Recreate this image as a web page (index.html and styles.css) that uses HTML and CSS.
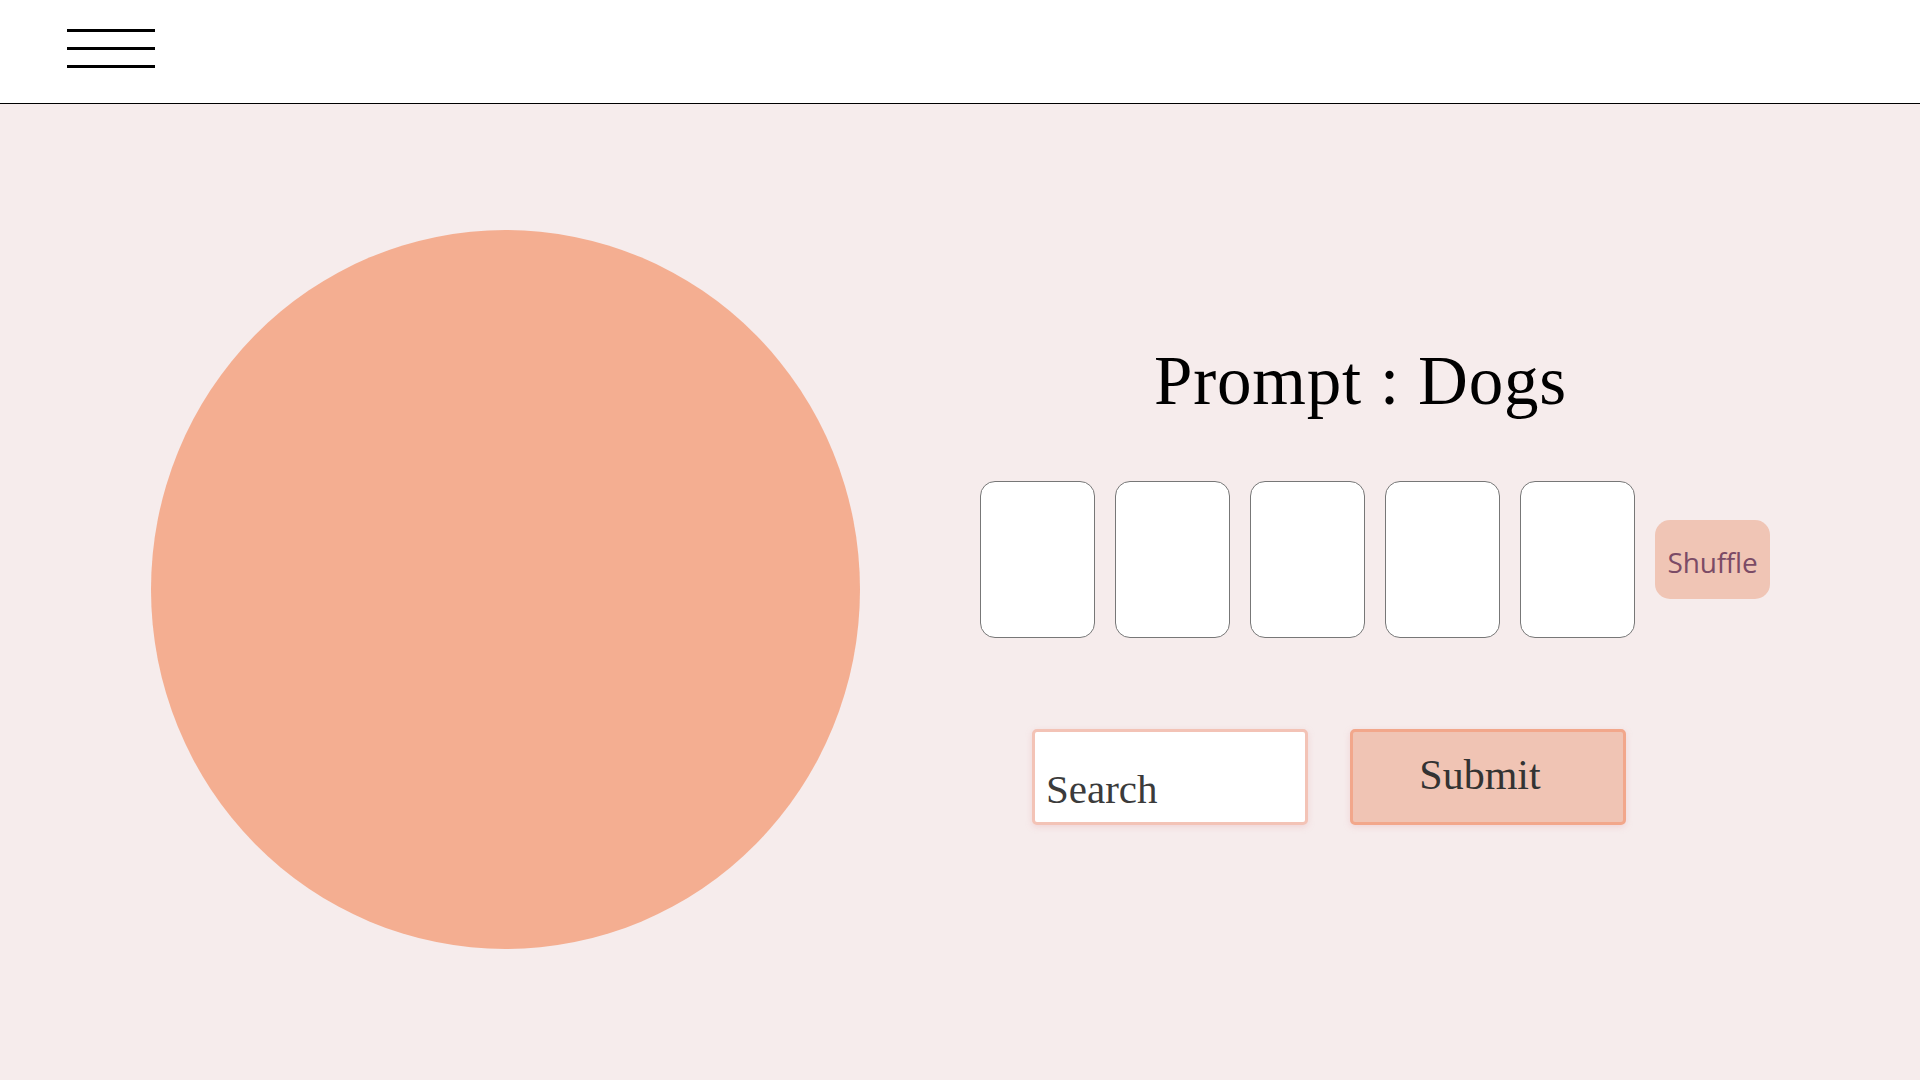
FILE: index.html
```html
<!DOCTYPE html>
<html lang="en">
<head>
<meta charset="utf-8">
<title>Prompt</title>
<link rel="stylesheet" href="styles.css">
</head>
<body>
<header class="topbar">
  <button class="burger" aria-label="Menu">
    <span class="burger-line"></span>
    <span class="burger-line"></span>
    <span class="burger-line"></span>
  </button>
</header>
<main class="main">
  <section class="art-col">
    <div class="blob"></div>
  </section>
  <section class="panel">
    <h1 class="prompt">Prompt : Dogs</h1>
    <div class="cards-row">
      <div class="card"></div>
      <div class="card"></div>
      <div class="card"></div>
      <div class="card"></div>
      <div class="card"></div>
      <button class="shuffle">Shuffle</button>
    </div>
    <form class="form-row">
      <input class="search" type="text" placeholder="Search">
      <button class="submit" type="button">Submit</button>
    </form>
  </section>
</main>
</body>
</html>
```

FILE: styles.css
```css
* { box-sizing: border-box; }
html, body { margin: 0; padding: 0; }
body {
  width: 1920px;
  height: 1080px;
  overflow: hidden;
  background: #f6ecec;
  font-family: "Liberation Serif", "Times New Roman", serif;
}
.topbar {
  height: 104px;
  background: #ffffff;
  border-bottom: 1px solid #000;
  padding: 29px 0 0 67px;
}
.burger {
  display: flex;
  flex-direction: column;
  gap: 15px;
  padding: 0;
  margin: 0;
  border: 0;
  background: transparent;
}
.burger-line {
  display: block;
  width: 88px;
  height: 3px;
  background: #000;
}
.main {
  display: flex;
  align-items: flex-start;
}
.art-col {
  padding: 126px 0 0 151px;
}
.blob {
  width: 709px;
  height: 719px;
  border-radius: 50%;
  background: #f4ae91;
}
.panel {
  display: flex;
  flex-direction: column;
  align-items: flex-start;
  margin-left: 120px;
  padding-top: 243px;
}
.prompt {
  margin: 0 0 0 174px;
  font-weight: 400;
  font-size: 69px;
  line-height: 69px;
  letter-spacing: 0.8px;
  color: #000;
}
.cards-row {
  display: flex;
  align-items: center;
  gap: 20px;
  margin-top: 65px;
}
.card {
  width: 115px;
  height: 157px;
  background: #fff;
  border: 1px solid #777;
  border-radius: 15px;
}
.shuffle {
  width: 115px;
  height: 79px;
  border: 0;
  border-radius: 15px;
  background: #f0c5b5;
  color: #7b4b66;
  font-family: "Open Sans", "Noto Sans", sans-serif;
  font-size: 28px;
  letter-spacing: -0.2px;
  padding: 4px 0 0 0;
}
.form-row {
  display: flex;
  gap: 42px;
  margin: 91px 0 0 52px;
}
.search {
  width: 276px;
  height: 96px;
  border: 3px solid #f3c3b6;
  border-radius: 5px;
  background: #fff;
  box-shadow: 0 2px 6px rgba(230, 170, 175, 0.35);
  padding: 24px 10px 0 11px;
  font-family: "Liberation Serif", "Times New Roman", serif;
  font-size: 41px;
  color: #3b3b3b;
  outline: none;
}
.search::placeholder { color: #3b3b3b; opacity: 1; }
.submit {
  width: 276px;
  height: 96px;
  border: 3px solid #f2a78b;
  border-radius: 5px;
  background: #f0c4b4;
  box-shadow: 0 2px 6px rgba(230, 170, 175, 0.35);
  padding: 0 16px 4px 0;
  font-family: "Liberation Serif", "Times New Roman", serif;
  font-size: 42px;
  color: #333;
}
```
